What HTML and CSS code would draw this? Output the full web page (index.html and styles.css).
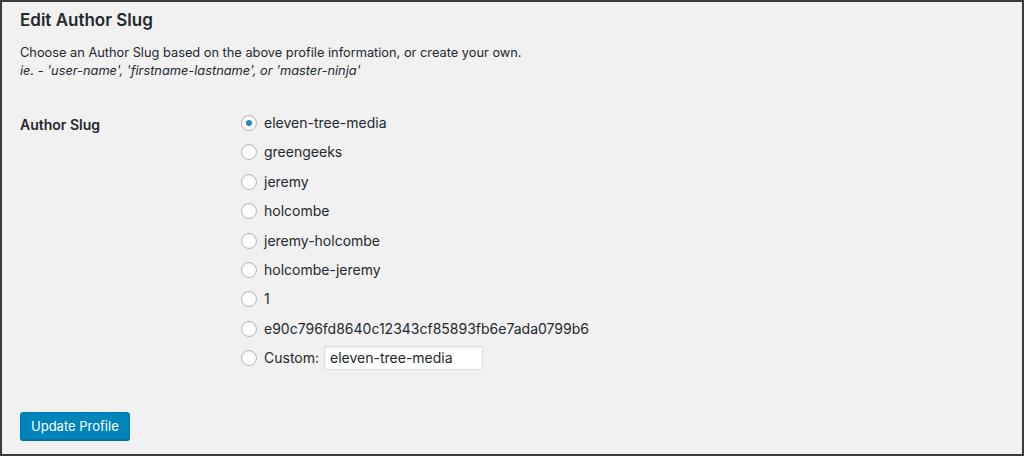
FILE: index.html
```html
<!DOCTYPE html>
<html>
<head>
<meta charset="utf-8">
<link rel="stylesheet" href="styles.css">
</head>
<body>
<div class="frame">
  <h2 class="title">Edit Author Slug</h2>
  <p class="desc">Choose an Author Slug based on the above profile information, or create your own.<br><em>ie. - 'user-name', 'firstname-lastname', or 'master-ninja'</em></p>
  <div class="field-row">
    <div class="field-label">Author Slug</div>
    <div class="options">
      <label class="opt"><span class="radio checked"></span>eleven-tree-media</label>
      <label class="opt"><span class="radio"></span>greengeeks</label>
      <label class="opt"><span class="radio"></span>jeremy</label>
      <label class="opt"><span class="radio"></span>holcombe</label>
      <label class="opt"><span class="radio"></span>jeremy-holcombe</label>
      <label class="opt"><span class="radio"></span>holcombe-jeremy</label>
      <label class="opt"><span class="radio"></span>1</label>
      <label class="opt"><span class="radio"></span>e90c796fd8640c12343cf85893fb6e7ada0799b6</label>
      <label class="opt"><span class="radio"></span>Custom:<span class="input">eleven-tree-media</span></label>
    </div>
  </div>
  <div class="actions"><span class="button">Update Profile</span></div>
</div>
</body>
</html>
```

FILE: styles.css
```css
* { box-sizing: border-box; }
html, body { margin: 0; padding: 0; }
body {
  width: 1024px;
  height: 456px;
  font-family: Inter, "Liberation Sans", Arial, sans-serif;
  color: #23282d;
  background: #f1f1f1;
}
.frame {
  width: 1024px;
  height: 456px;
  border: 2px solid #3c3c3c;
  background: #f1f1f1;
  padding: 0 18px;
}
.title {
  margin: 0;
  padding-top: 6px;
  font-size: 17px;
  font-weight: 600;
  line-height: 24px;
}
.desc {
  margin: 12px 0 0;
  font-size: 12.8px;
  line-height: 18px;
}
.desc em { font-style: italic; }
.field-row {
  display: flex;
  margin-top: 33px;
}
.field-label {
  width: 221px;
  font-size: 14px;
  font-weight: 600;
  line-height: 20px;
  padding-top: 2px;
}
.options {
  display: flex;
  flex-direction: column;
  gap: 9.4px;
}
.opt {
  display: flex;
  align-items: center;
  height: 20px;
  font-size: 14px;
  line-height: 20px;
}
.radio {
  width: 16px;
  height: 16px;
  border-radius: 50%;
  border: 1px solid #b4b9be;
  background: #fff;
  margin-right: 7px;
  display: flex;
  align-items: center;
  justify-content: center;
  box-shadow: inset 0 1px 2px rgba(0,0,0,0.07);
}
.radio.checked::after {
  content: "";
  width: 6px;
  height: 6px;
  border-radius: 50%;
  background: #1e8cbe;
}
.input {
  display: inline-block;
  margin-left: 5px;
  width: 159px;
  height: 24px;
  border: 1px solid #ddd;
  background: #fff;
  padding: 0 5px;
  line-height: 22px;
  font-size: 14px;
  box-shadow: inset 0 1px 2px rgba(0,0,0,0.07);
}
.actions {
  margin-top: 44px;
}
.button {
  display: inline-block;
  height: 28px;
  padding: 0 10px;
  background: #0085ba;
  border: 1px solid #0073aa;
  border-radius: 3px;
  box-shadow: 0 1px 0 #006799;
  color: #fff;
  font-size: 13px;
  line-height: 26px;
}
```
